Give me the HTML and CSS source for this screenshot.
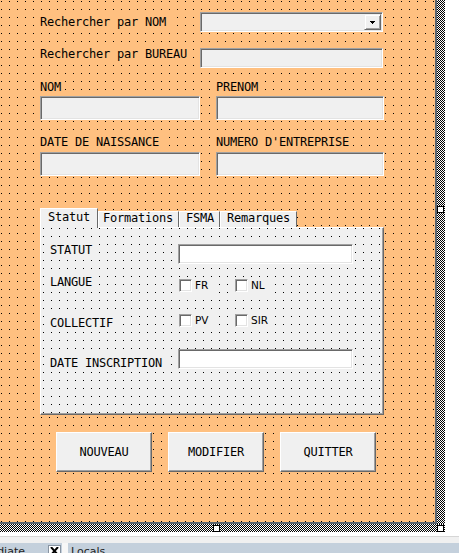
FILE: index.html
```html
<!DOCTYPE html>
<html lang="fr">
<head>
<meta charset="utf-8">
<title>UserForm</title>
<link rel="stylesheet" href="styles.css">
</head>
<body>
<div class="designer">
  <div class="canvas-row">
    <div class="form">
      <div class="row">
        <span class="lbl lbl-a">Rechercher par NOM</span>
        <div class="field combo">
          <span class="combo-btn"><svg width="5" height="3" viewBox="0 0 5 3"><path d="M0 0h5v1h-1v1h-1v1h-1v-1h-1v-1h-1z" fill="#000"/></svg></span>
        </div>
      </div>
      <div class="row row-b">
        <span class="lbl lbl-b">Rechercher par BUREAU</span>
        <div class="field field-search"></div>
      </div>
      <div class="pair pair-1">
        <div class="col"><span class="lbl">NOM</span><div class="field field-tall"></div></div>
        <div class="col"><span class="lbl">PRENOM</span><div class="field field-tall"></div></div>
      </div>
      <div class="pair pair-2">
        <div class="col"><span class="lbl">DATE DE NAISSANCE</span><div class="field field-tall"></div></div>
        <div class="col"><span class="lbl">NUMERO D'ENTREPRISE</span><div class="field field-tall"></div></div>
      </div>
      <div class="tabs">
        <span class="tab tab-active tab-statut">Statut</span>
        <span class="tab tab-formations">Formations</span>
        <span class="tab tab-fsma">FSMA</span>
        <span class="tab tab-remarques">Remarques</span>
      </div>
      <div class="panel">
        <div class="prow">
          <span class="plbl plbl-1">STATUT</span>
          <div class="field field-white"></div>
        </div>
        <div class="prow prow-2">
          <span class="plbl">LANGUE</span>
          <div class="checks checks-2">
            <span class="check"><span class="box"></span>FR</span>
            <span class="check"><span class="box"></span>NL</span>
          </div>
        </div>
        <div class="prow prow-3">
          <span class="plbl plbl-3">COLLECTIF</span>
          <div class="checks">
            <span class="check"><span class="box"></span>PV</span>
            <span class="check"><span class="box"></span>SIR</span>
          </div>
        </div>
        <div class="prow prow-4">
          <span class="plbl plbl-4">DATE INSCRIPTION</span>
          <div class="field field-white"></div>
        </div>
      </div>
      <div class="buttons">
        <button class="btn" type="button">NOUVEAU</button>
        <button class="btn" type="button">MODIFIER</button>
        <button class="btn" type="button">QUITTER</button>
      </div>
    </div>
    <div class="vstrip"><span class="handle handle-mid"></span></div>
  </div>
  <div class="hstrip"><span class="handle handle-hmid"></span><span class="handle handle-corner"></span></div>
</div>
<div class="dock">
  <div class="dock-pane dock-immediate">
    <span class="dock-clip"><span class="dock-title">Immediate</span></span>
    <span class="dock-close"><svg width="9" height="8" viewBox="0 0 9 8"><path d="M1 0l7 8M8 0l-7 8" stroke="#000" stroke-width="2"/></svg></span>
  </div>
  <div class="dock-sep"></div>
  <div class="dock-pane dock-locals"><span class="dock-title">Locals</span></div>
</div>
</body>
</html>
```

FILE: styles.css
```css
* { box-sizing: border-box; }
html, body { margin: 0; padding: 0; }
body {
  width: 459px;
  height: 553px;
  overflow: hidden;
  background: #fff;
  font-family: "DejaVu Sans Mono", monospace;
  font-size: 12px;
  letter-spacing: -0.22px;
  color: #000;
}

.designer { width: 445px; }
.canvas-row { display: flex; height: 524px; }

.form {
  width: 437px;
  height: 524px;
  border-right: 2px solid #5c6670;
  border-bottom: 2px solid #5c6670;
  background: conic-gradient(at 1px 1px, transparent 75%, #000 0) 1px 1px / 8px 8px, #ffc080;
  padding-top: 12px;
}

.vstrip, .hstrip {
  position: relative;
  background: conic-gradient(#000 25%, #fff 0 50%, #000 0 75%, #fff 0) 0 0 / 2px 2px;
}
.vstrip { width: 8px; height: 524px; }
.hstrip { width: 445px; height: 8px; }
.handle {
  position: absolute;
  width: 7px;
  height: 7px;
  background: #fff;
  border: 1px solid #000;
}
.handle-mid { top: 206px; left: 0; }
.handle-hmid { top: 1px; left: 213px; }
.handle-corner { top: 1px; left: 437px; }

/* rows of the form */
.row {
  display: grid;
  grid-template-columns: 160px 183px;
  align-items: start;
  padding-left: 40px;
  height: 20px;
}
.row-b { margin-top: 16px; }

.lbl {
  justify-self: start;
  height: 14px;
  line-height: 14px;
  padding-right: 4px;
  background: #ffc080;
  white-space: nowrap;
}
.lbl-a { margin-top: 3px; }
.lbl-b { margin-top: -1px; }

.field {
  background: #f0f0f0;
  border: 1px solid;
  border-color: #a0a0a0 #fff #fff #a0a0a0;
  box-shadow: inset 1px 1px #696969, inset -1px -1px #e3e3e3;
}
.combo, .field-search { width: 183px; height: 20px; }
.combo { display: flex; justify-content: flex-end; padding: 1px; }
.combo-btn {
  width: 17px;
  height: 16px;
  display: flex;
  align-items: center;
  justify-content: center;
  background: #f0f0f0;
  border: 1px solid;
  border-color: #f0f0f0 #696969 #696969 #f0f0f0;
  box-shadow: inset 1px 1px #fff, inset -1px -1px #a0a0a0;
}
.combo-btn svg { display: block; }

.pair {
  display: grid;
  grid-template-columns: 160px 168px;
  column-gap: 16px;
  padding-left: 40px;
}
.pair-1 { margin-top: 12px; }
.pair-2 { margin-top: 15px; }
.col { display: flex; flex-direction: column; align-items: flex-start; }
.field-tall { align-self: stretch; height: 24px; margin-top: 2px; }
.pair-2 .field-tall { margin-top: 3px; }

/* tabs */
.tabs {
  position: relative;
  z-index: 1;
  display: flex;
  align-items: flex-end;
  height: 19px;
  margin: 32px 0 0 40px;
}
.tab {
  height: 16px;
  line-height: 13px;
  border-top: 1px solid #fff;
  border-left: 1px solid #fff;
  border-right: 1px solid #696969;
  background: #f0f0f0;
  white-space: nowrap;
}
.tab-active {
  height: 20px;
  margin-bottom: -1px;
  padding-top: 1px;
  line-height: 14px;
}
.tab-statut { width: 58px; padding-left: 7px; }
.tab-formations { width: 81px; padding-left: 4px; }
.tab-fsma { width: 41px; padding-left: 6px; }
.tab-remarques { width: 77px; padding-left: 6px; }

/* tab page */
.panel {
  width: 344px;
  height: 188px;
  margin-left: 40px;
  padding: 16px 0 0 9px;
  border: 1px solid;
  border-color: #fff #696969 #696969 #fff;
  box-shadow: inset -1px -1px #a0a0a0;
  background: conic-gradient(at 1px 1px, transparent 75%, #000 0) 2px 0 / 8px 8px, #f0f0f0;
}
.prow {
  display: grid;
  grid-template-columns: 128px auto;
  align-items: start;
}
.prow-2 { margin-top: 11px; }
.prow-3 { margin-top: 21px; }
.prow-4 { margin-top: 19px; }
.plbl {
  justify-self: start;
  height: 14px;
  line-height: 14px;
  padding-right: 3px;
  background: #f0f0f0;
  white-space: nowrap;
}
.plbl-1 { margin-top: -1px; }
.plbl-3 { margin-top: 2px; }
.plbl-4 { margin-top: 7px; }
.field-white { width: 175px; height: 20px; background: #fff; }

.checks { display: flex; margin-left: 1px; }
.checks-2 { margin-top: 4px; }
.check {
  display: flex;
  align-items: flex-start;
  width: 40px;
  height: 14px;
  margin-right: 16px;
  background: #f0f0f0;
  font-family: "DejaVu Sans", sans-serif;
  font-size: 10.5px;
  letter-spacing: 0;
  line-height: 13px;
}
.box {
  flex: none;
  width: 13px;
  height: 13px;
  margin-right: 3px;
  background: #fff;
  border: 1px solid;
  border-color: #a0a0a0 #fff #fff #a0a0a0;
  box-shadow: inset 1px 1px #696969, inset -1px -1px #e3e3e3;
}

/* buttons */
.buttons {
  display: flex;
  gap: 16px;
  padding-left: 56px;
  margin-top: 17px;
}
.btn {
  width: 96px;
  height: 40px;
  padding: 0;
  font: inherit;
  letter-spacing: inherit;
  color: #000;
  background: #f0f0f0;
  border: 1px solid;
  border-color: #fff #696969 #696969 #fff;
  box-shadow: inset -1px -1px #a0a0a0;
}

/* docked windows below */
.dock {
  display: flex;
  margin-top: 4px;
  border-top: 1px solid #d6d6d6;
  background: #f0f0f0;
  padding-top: 6px;
  height: 27px;
  font-family: "DejaVu Sans", sans-serif;
  font-size: 11px;
  letter-spacing: 0;
  color: #1e1e1e;
}
.dock-pane {
  display: flex;
  align-items: flex-start;
  height: 20px;
  background: #c4d0dc;
}
.dock-immediate { width: 62px; }
.dock-clip {
  width: 26px;
  display: flex;
  justify-content: flex-end;
  overflow: hidden;
  padding-right: 1px;
  white-space: nowrap;
}
.dock-title { line-height: 13px; padding-top: 2px; white-space: nowrap; }
.dock-close {
  width: 13px;
  height: 12px;
  margin: 2px 0 0 22px;
  display: flex;
  align-items: center;
  justify-content: center;
  background: #fff;
  border: 1px solid #8894a2;
}
.dock-close svg { display: block; }
.dock-sep { width: 6px; background: #f7f7f7; }
.dock-locals { flex: 1; padding-left: 3px; }
```
